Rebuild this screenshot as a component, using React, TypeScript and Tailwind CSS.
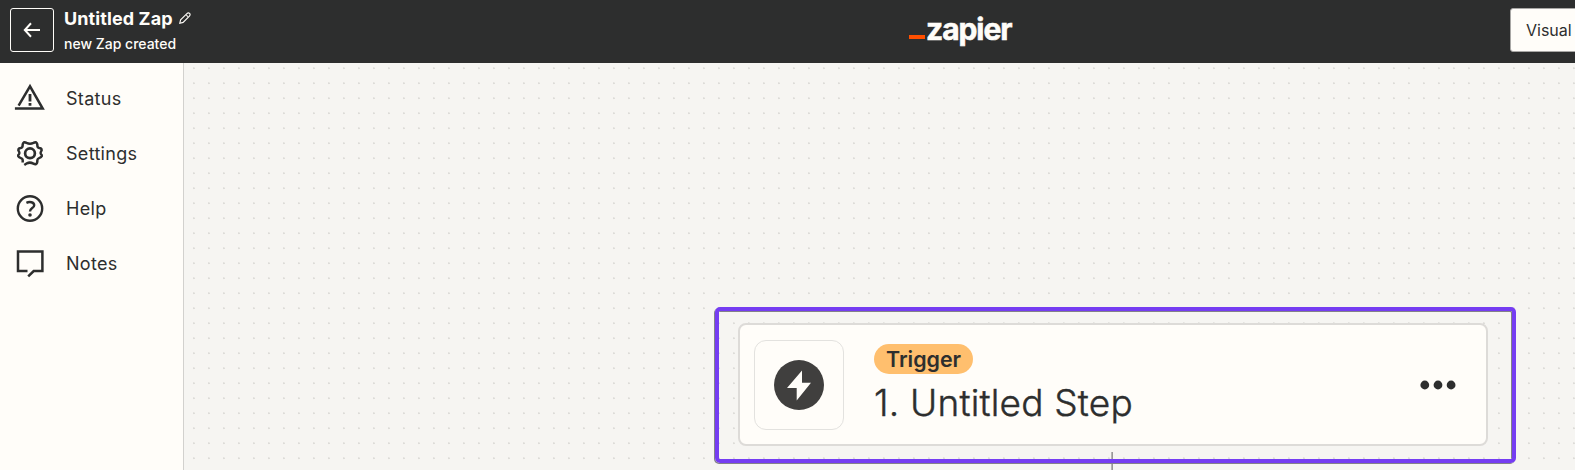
import type { ReactNode } from "react";

function BackButton() {
  return (
    <button className="flex h-11 w-11 shrink-0 items-center justify-center rounded-[3px] border border-[#fffdf9]" aria-label="Back">
      <svg width="18" height="16" viewBox="0 0 18 16" fill="none" stroke="#fffdf9" strokeWidth="2">
        <path d="M17 8H2M8 1.3L1.8 8L8 14.7" />
      </svg>
    </button>
  );
}

function PencilIcon() {
  return (
    <svg className="-mt-0.5" width="12" height="12" viewBox="0 0 12 12" fill="none" stroke="#fffdf9" strokeWidth="1.1">
      <path d="M.8 11.2L1.6 7.9L7.9 1.6Q9.3 .3 10.6 1.4Q11.7 2.7 10.4 4.1L4.1 10.4ZM7.4 3.2L8.8 4.6" />
    </svg>
  );
}

function StatusIcon() {
  return (
    <svg width="32" height="32" viewBox="0 0 32 32" fill="none" stroke="#2d2e2e" strokeWidth="2.5">
      <path d="M4.6 22.6L16 3.3L28.7 25.6H.9" />
      <path d="M16 11V18.4M16 20V22.7" strokeWidth="2.8" />
    </svg>
  );
}

function SettingsIcon() {
  return (
    <svg width="32" height="32" viewBox="0 0 32 32" fill="none" stroke="#2d2e2e" strokeWidth="2.5">
      <circle cx="16" cy="15.3" r="4.9" strokeWidth="2.7" />
      <path d="M8.7 24.6V22Q8.5 20.6 6.9 20.1Q4.6 19.4 4.2 18.2Q3.9 17.2 5 16.3Q6 15.3 5.1 13.8Q3.9 12.3 4.5 11.1Q5 10.2 6.7 10Q8.6 9.6 8.6 7.8Q8.6 4.9 10 4.3Q11 4 12.6 4.9Q16 6.7 19.4 4.9Q21 4 22 4.3Q23.4 4.9 23.4 7.8Q23.4 9.6 25.3 10Q27 10.2 27.5 11.1Q28.1 12.3 26.9 13.8Q26 15.3 27 16.3Q28.1 17.2 27.8 18.2Q27.4 19.4 25.1 20.1Q23.5 20.6 23.4 22Q23.4 25.5 22 26.1Q21 26.5 19.4 25.6Q16 23.8 12.9 25.3L10.3 27" />
    </svg>
  );
}

function HelpIcon() {
  return (
    <svg width="32" height="32" viewBox="0 0 32 32" fill="none" stroke="#2d2e2e" strokeWidth="2.4">
      <circle cx="16" cy="15.5" r="12.2" />
      <path d="M12.4 9.8C15.4 8.4 20.2 8.9 20.2 12.2C20.2 15.3 16 14.9 16 18.6" />
      <circle cx="16" cy="22" r="1.8" fill="#2d2e2e" stroke="none" />
    </svg>
  );
}

function NotesIcon() {
  return (
    <svg width="32" height="32" viewBox="0 0 32 32" fill="none" stroke="#2d2e2e" strokeWidth="2.5">
      <path d="M13.5 23H4V3.4H28.4V23H19.7L14.2 28.3" />
    </svg>
  );
}

function NavItem({ icon, label }: { icon: ReactNode; label: string }) {
  return (
    <a className="flex h-[55px] items-center gap-5 pl-3.5 text-[18px] tracking-[0.3px]">
      {icon}
      <span>{label}</span>
    </a>
  );
}

function Logo() {
  return (
    <div className="flex items-end">
      <span className="mb-[10px] h-1 w-4 bg-[#ff4f00]" />
      <span className="ml-px pt-px text-[30px] leading-[40px] font-bold tracking-[-1.05px] text-[#fffdf9] [-webkit-text-stroke:0.6px_#fffdf9]">zapier</span>
    </div>
  );
}

function StepCard() {
  return (
    <div className="flex h-[123px] w-[750px] items-center rounded-lg border-2 border-[#dddbd8] bg-[#fffdf9] pl-[14px]">
      <div className="flex h-[90px] w-[90px] items-center justify-center rounded-xl border border-[#e3e2df]">
        <svg width="50" height="50" viewBox="0 0 50 50">
          <circle cx="25" cy="25" r="25" fill="#403f3e" />
          <path d="M28 10.5L13 28H22.7V40.5L37 22.8H28Z" fill="#fffdf9" />
        </svg>
      </div>
      <div className="ml-[30px] flex flex-col items-start">
        <span className="flex h-[30px] items-center rounded-full bg-[#ffbf6e] px-3 pt-px text-[21.4px] font-semibold">Trigger</span>
        <span className="mt-1.5 text-[37px] leading-[46px] font-light tracking-[0.2px] whitespace-nowrap [-webkit-text-stroke:0.4px_#2d2e2e]">1. Untitled Step</span>
      </div>
      <svg className="mt-px mr-[29px] ml-auto" width="38" height="10" viewBox="0 0 38 10" fill="#2d2e2e">
        <circle cx="5.8" cy="5" r="4.4" />
        <circle cx="19" cy="5" r="4.4" />
        <circle cx="32.1" cy="5" r="4.4" />
      </svg>
    </div>
  );
}

export default function App() {
  return (
    <div className="flex h-[470px] w-full flex-col overflow-hidden bg-[#f6f5f2] font-['Inter',sans-serif] text-[#2d2e2e]">
      <header className="flex h-[63px] shrink-0 items-start overflow-hidden bg-[#2d2e2e] pt-2 pl-2.5 text-[#fffdf9]">
        <BackButton />
        <div className="ml-2.5 w-[835px] shrink-0">
          <div className="flex items-center gap-1.5 text-[18px] leading-[22px] font-bold tracking-[0.1px]">
            Untitled Zap
            <PencilIcon />
          </div>
          <div className="mt-1 text-[14px] leading-5 font-medium">new Zap created</div>
        </div>
        <div className="ml-[10px] w-[601px] shrink-0">
          <Logo />
        </div>
        <button className="h-11 w-[120px] shrink-0 rounded-[3px] border border-[#a8a7a5] bg-[#fffdf9] pl-[15px] text-left text-[16px] text-[#2d2e2e]">
          Visual
        </button>
      </header>
      <div className="flex min-h-0 flex-1">
        <nav className="w-[184px] shrink-0 border-r border-[#d2d1ce] bg-[#fffdf9] pt-2">
          <NavItem icon={<StatusIcon />} label="Status" />
          <NavItem icon={<SettingsIcon />} label="Settings" />
          <NavItem icon={<HelpIcon />} label="Help" />
          <NavItem icon={<NotesIcon />} label="Notes" />
        </nav>
        <main className="relative flex-1 overflow-hidden bg-[radial-gradient(circle_at_9.8px_5.3px,#dddcd9_0.7px,transparent_1.3px)] bg-[length:15px_15px]">
          <div className="absolute top-[389px] left-[927px] h-5 w-0.5 bg-linear-to-r from-[#c5c4c3] to-[#8a8989]" />
          <div className="absolute top-[244px] left-[531px] flex h-[156px] w-[801px] rounded-[5px] border-4 border-[#753df2] pt-[12px] pl-[19px] shadow-[-1px_1px_0_#83808a,inset_-1px_1px_0_#83808a]">
            <StepCard />
          </div>
        </main>
      </div>
    </div>
  );
}
